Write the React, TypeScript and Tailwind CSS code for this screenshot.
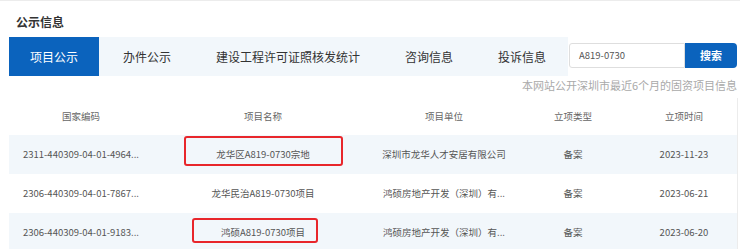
import React from "react";

const tabs = ["项目公示", "办件公示", "建设工程许可证照核发统计", "咨询信息", "投诉信息"];

type Row = {
  code: string;
  name: string;
  unit: string;
  kind: string;
  date: string;
  mark?: string;
};

const rows: Row[] = [
  {
    code: "2311-440309-04-01-4964...",
    name: "龙华区A819-0730宗地",
    unit: "深圳市龙华人才安居有限公司",
    kind: "备案",
    date: "2023-11-23",
    mark: "left-[31px] top-[1px] w-[159px] h-[30px]",
  },
  {
    code: "2306-440309-04-01-7867...",
    name: "龙华民治A819-0730项目",
    unit: "鸿硕房地产开发（深圳）有...",
    kind: "备案",
    date: "2023-06-21",
  },
  {
    code: "2306-440309-04-01-9183...",
    name: "鸿硕A819-0730项目",
    unit: "鸿硕房地产开发（深圳）有...",
    kind: "备案",
    date: "2023-06-20",
    mark: "left-[39px] top-[5px] w-[126px] h-[25px]",
  },
];

const cols = "grid grid-cols-[144px_220px_142px_116px_106px]";

export default function App() {
  return (
    <div
      className="w-[740px] h-[249px] overflow-hidden bg-white border-t border-[#ececec]"
      style={{ fontFamily: '"Noto Sans CJK SC", "Noto Sans", sans-serif' }}
    >
      <h2 className="pl-4 pt-[12px] h-[36px] text-[12px] font-bold text-[#333] leading-[18px]">公示信息</h2>

      <div className="flex items-start pl-[9px]">
        {/* Tabs */}
        <div className="flex shrink-0 h-[39px] pr-[1px] bg-[#f2f7fb]">
          {tabs.map((t, i) => (
            <div
              key={t}
              className={
                i === 0
                  ? "flex items-center shrink-0 whitespace-nowrap px-[21px] bg-[#0b63bd] text-white text-[12px]"
                  : "flex items-center shrink-0 whitespace-nowrap px-[21px] ml-[3px] text-[#333] text-[12px]"
              }
            >
              {t}
            </div>
          ))}
        </div>

        {/* Search */}
        <div className="flex ml-auto mr-[3px] mt-[6px] h-[25px]">
          <div className="w-[116px] flex items-center pl-[9px] border border-[#dedede] rounded-l-[3px] text-[9.5px] text-[#555]">
            A819-0730
          </div>
          <button className="w-[52px] bg-[#0b63bd] text-white text-[11px] font-bold rounded-r-[4px]">搜索</button>
        </div>
      </div>

      <p className="mt-[1px] pr-[3px] text-right text-[11px] text-[#a9a9a9] leading-[16px] whitespace-nowrap">
        本网站公开深圳市最近6个月的固资项目信息
      </p>

      {/* Table */}
      <div className="ml-[9px] w-[729px] border-r border-[#ececec] mt-[5px] text-[9.5px] text-[#555]">
        <div className={`${cols} h-[37px] items-center text-center text-[#666]`}>
          <div>国家编码</div>
          <div>项目名称</div>
          <div>项目单位</div>
          <div>立项类型</div>
          <div>立项时间</div>
        </div>
        {rows.map((r, i) => (
          <div
            key={r.code}
            className={`${cols} h-[39px] items-center text-center ${i % 2 === 0 ? "bg-[#f2f7fb]" : "bg-white"}`}
          >
            <div>{r.code}</div>
            <div className="relative h-full flex items-center justify-center">
              {r.name}
              {r.mark && (
                <span className={`absolute ${r.mark} border-2 border-[#e8262b] rounded-[3px]`} />
              )}
            </div>
            <div>{r.unit}</div>
            <div>{r.kind}</div>
            <div>{r.date}</div>
          </div>
        ))}
      </div>
    </div>
  );
}
